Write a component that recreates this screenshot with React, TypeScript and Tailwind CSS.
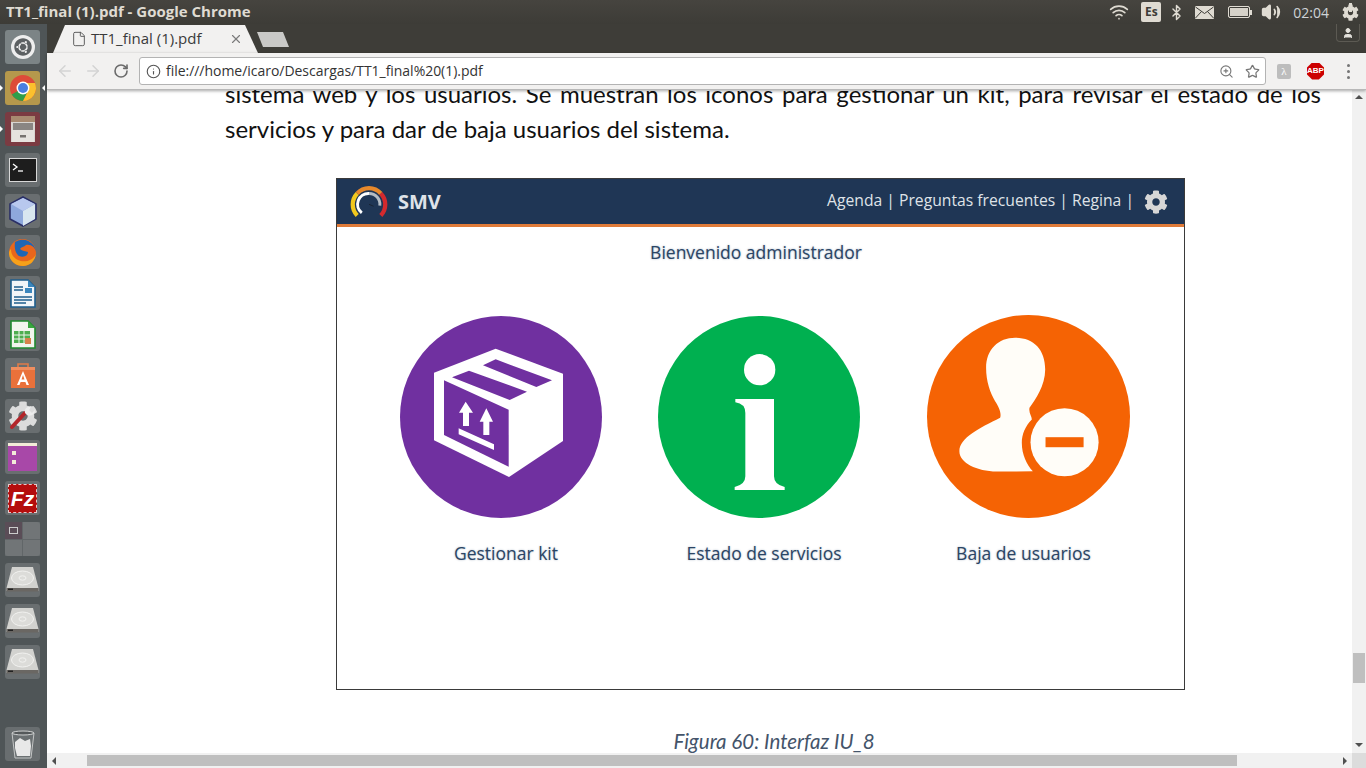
import React from 'react'
import { ArrowLeft, ArrowRight, RotateCw, Info, ZoomIn, Star, File, X, Wifi, Bluetooth, Volume2, User } from 'lucide-react'
import { FaCog, FaUbuntu } from 'react-icons/fa'

const Tile: React.FC<{ className?: string; children?: React.ReactNode }> = ({ className = 'bg-white/15', children }) => (
  <div className={`relative h-[34px] w-[35px] shrink-0 rounded-[3px] flex items-center justify-center ${className}`}>{children}</div>
)

const Disk = () => (
  <svg width="33" height="28" viewBox="0 0 33 28">
    <path d="M6 1H27L32.5 22V25H0.5V22Z" fill="#d2d2cf" />
    <path d="M0.5 22H32.5V25.5H0.5Z" fill="#6a6763" />
    <rect x="2" y="22.5" width="5" height="1.5" fill="#222222" />
    <ellipse cx="16.5" cy="12" rx="11" ry="7" fill="#dcdcd9" stroke="#f2f2f0" strokeWidth="1" />
    <ellipse cx="16.5" cy="12" rx="3.5" ry="2.2" fill="none" stroke="#f2f2f0" strokeWidth="1" />
  </svg>
)

const Launcher = () => (
  <aside className="w-[47px] shrink-0 flex flex-col gap-[7px] px-[5px] pt-[6px] bg-[#4f5557]">
    <Tile className="bg-[#7c8486]">
      <div className="w-[24px] h-[24px] rounded-full bg-[#eeeeee] flex items-center justify-center text-[#5d6163]"><FaUbuntu size={18} /></div>
    </Tile>
    <Tile className="bg-[#b5984c]">
      <span className="absolute -left-[5px] top-[14px] w-0 h-0 border-y-[3px] border-y-transparent border-l-[3px] border-l-white" />
      <span className="absolute -right-[5px] top-[14px] w-0 h-0 border-y-[3px] border-y-transparent border-r-[3px] border-r-white" />
      <svg width="28" height="28" viewBox="0 0 28 28">
        <circle cx="14" cy="14" r="13" fill="#dd4b39" />
        <path d="M14 14L2.8 20.5A13 13 0 0 0 14 27L20.5 14Z" fill="#2e9e4a" />
        <path d="M14 9H26A13 13 0 0 1 14 27L20.5 14Z" fill="#fbc02d" />
        <circle cx="14" cy="14" r="6.5" fill="#fff" />
        <circle cx="14" cy="14" r="5" fill="#4a7fe0" />
      </svg>
    </Tile>
    <Tile className="bg-[#7b3b42]">
      <span className="absolute -left-[5px] top-[14px] w-0 h-0 border-y-[3px] border-y-transparent border-l-[3px] border-l-white" />
      <svg width="26" height="28" viewBox="0 0 26 28">
        <rect x="1" y="1" width="24" height="26" fill="#d8d5d0" />
        <rect x="1" y="1" width="24" height="6" fill="#a88a70" />
        <rect x="3" y="8" width="20" height="7" fill="#8a8683" />
        <rect x="2" y="15" width="22" height="12" fill="#e6e3de" />
        <rect x="10" y="20" width="6" height="2.5" fill="#77736f" />
      </svg>
    </Tile>
    <Tile>
      <svg width="28" height="24" viewBox="0 0 28 24">
        <rect x="0.5" y="0.5" width="27" height="23" fill="#1d1d1d" stroke="#d8d8d8" />
        <path d="M4 6L8 9L4 12" fill="none" stroke="#fff" strokeWidth="1.3" />
        <path d="M9 13H14" stroke="#fff" strokeWidth="1.3" />
      </svg>
    </Tile>
    <Tile>
      <svg width="28" height="31" viewBox="0 0 28 31">
        <path d="M14 1L27 8V23L14 30L1 23V8Z" fill="#8ea8dc" stroke="#2a2f66" strokeWidth="1.6" />
        <path d="M14 15L26 8V23L14 30Z" fill="#d8e6f0" />
        <path d="M14 2L26 8L14 15L2 8Z" fill="#b8c8ee" />
      </svg>
    </Tile>
    <Tile>
      <svg width="29" height="29" viewBox="0 0 29 29">
        <circle cx="14.5" cy="14.5" r="13.5" fill="#e8661c" />
        <path d="M7 4A13.5 13.5 0 0 1 28 14C27 9 23 6 18 7C16 9 13 9 12 11C14 13 18 13 20 14C20 18 15 20 11 18C8 16 6 11 7 4Z" fill="#1f66b5" />
        <path d="M1 15C1 23 8 28 15 28C22 28 27 23 28 16C25 23 16 25 10 22C6 20 3 17 3 11C2 12 1 13 1 15Z" fill="#f7a11a" />
      </svg>
    </Tile>
    <Tile>
      <svg width="26" height="29" viewBox="0 0 26 29">
        <path d="M1 1H18L25 8V28H1Z" fill="#f2f5f8" stroke="#1f5e8c" strokeWidth="1.6" />
        <path d="M18 1L25 8H18Z" fill="#3b86bd" />
        <path d="M4 8H13M4 11H13M4 18H22M4 21H22M4 24H16" stroke="#1f5e8c" strokeWidth="1.6" />
        <rect x="15" y="9" width="7" height="5" fill="#3b86bd" />
      </svg>
    </Tile>
    <Tile>
      <svg width="26" height="29" viewBox="0 0 26 29">
        <path d="M1 1H18L25 8V28H1Z" fill="#f2f5ee" stroke="#1f8a2e" strokeWidth="1.6" />
        <path d="M18 1L25 8H18Z" fill="#3aa63f" />
        <path d="M4 11H20V23H4Z" fill="#4fae4f" />
        <path d="M4 15H20M4 19H20M9 11V23M14 11V23" stroke="#f2f5ee" strokeWidth="1" />
        <rect x="15" y="18" width="6" height="6" fill="#d9824a" />
      </svg>
    </Tile>
    <Tile>
      <svg width="26" height="28" viewBox="0 0 26 28">
        <path d="M8 6V3H18V6" fill="none" stroke="#e07b48" strokeWidth="1.6" />
        <path d="M1 6H25V27H1Z" fill="#e9713b" />
        <path d="M1 6H25V9H1Z" fill="#f08e5f" />
        <path d="M13 10L19 24H16.5L15.4 21H10.6L9.5 24H7ZM13 14L11.5 18.5H14.5Z" fill="#fff" />
      </svg>
    </Tile>
    <Tile>
      <FaCog size={30} className="text-[#dcdcdc]" />
      <svg className="absolute left-[3px] top-[3px]" width="29" height="29" viewBox="0 0 29 29">
        <path d="M4 25L17 11" stroke="#b3252a" strokeWidth="4" strokeLinecap="round" />
        <path d="M17 11C16 7 19 4 24 4L21 8L24 11L27 8C27 12 23 15 19 13Z" fill="#ededed" />
      </svg>
    </Tile>
    <Tile>
      <svg width="29" height="28" viewBox="0 0 29 28">
        <rect x="0" y="0" width="29" height="28" fill="#a848a8" />
        <rect x="0" y="0" width="29" height="3" fill="#f3ecd8" />
        <rect x="4" y="8" width="4" height="4" fill="#f3ecd8" />
        <rect x="4" y="17" width="4" height="4" fill="#f3ecd8" />
      </svg>
    </Tile>
    <Tile className="bg-white/15">
      <div className="w-[29px] h-[29px] bg-[#b40d0d] border border-dashed border-[#e8c8c8] flex items-center justify-center font-['Liberation_Sans',sans-serif] font-bold italic text-white text-[21px] leading-none">Fz</div>
    </Tile>
    <Tile className="bg-white/10">
      <div className="grid grid-cols-2 grid-rows-2 w-full h-full gap-px">
        <div className="bg-[#5a4d57] flex items-center justify-center"><div className="w-[9px] h-[7px] border border-[#cccccc]" /></div>
        <div className="bg-white/10" />
        <div className="bg-white/10" />
        <div className="bg-white/10" />
      </div>
    </Tile>
    <Tile><Disk /></Tile>
    <Tile><Disk /></Tile>
    <Tile><Disk /></Tile>
    <Tile className="bg-white/15 mt-auto mb-[7px]">
      <svg width="24" height="29" viewBox="0 0 24 29">
        <path d="M1 3H23L20 28H4Z" fill="#6b7072" stroke="#c4c6c6" />
        <ellipse cx="12" cy="3" rx="11" ry="2" fill="#55595b" stroke="#d0d2d2" />
        <path d="M4 12L9 8L14 11L19 9L20 16L19 26H6L4 18Z" fill="#e8e8e8" />
      </svg>
    </Tile>
  </aside>
)

const TopBar = () => (
  <header className="h-[24px] shrink-0 flex items-center bg-gradient-to-b from-[#46443f] to-[#3d3c37] text-[#dfdbd2]">
    <span className="pl-[6px] mb-[2px] font-['Open_Sans',sans-serif] font-bold text-[15px] leading-none">TT1_final (1).pdf - Google Chrome</span>
    <div className="ml-auto flex items-center h-full">
      <Wifi size={20} strokeWidth={2} className="text-[#dfdbd2]" />
      <div className="ml-[12px] w-[20px] h-[20px] rounded-[2px] bg-[#dfdbd2] text-[#3d3c37] text-[12px] font-bold flex items-center justify-center font-['Open_Sans',sans-serif]">Es</div>
      <Bluetooth size={17} className="ml-[7px]" />
      <svg width="19" height="13" viewBox="0 0 19 13" className="ml-[10px]">
        <rect x="0" y="0" width="19" height="13" rx="1" fill="#dfdbd2" />
        <path d="M0.5 1L9.5 7.5L18.5 1M0.5 12L6.5 5.5M18.5 12L12.5 5.5" fill="none" stroke="#3d3c37" strokeWidth="1" />
      </svg>
      <div className="ml-[14px] flex items-center">
        <div className="w-[22px] h-[12px] border border-[#dfdbd2] bg-[#d6d2c9] rounded-[2px] outline outline-[#3d3c37] -outline-offset-2" />
        <div className="w-[2px] h-[5px] bg-[#dfdbd2]" />
      </div>
      <Volume2 size={20} fill="#dfdbd2" className="ml-[9px]" />
      <span className="ml-[12px] font-['Open_Sans',sans-serif] text-[14px] text-[#cfd3d6]">02:04</span>
      <span className="ml-[13px] mr-[7px] relative flex items-center justify-center">
        <FaCog size={17} />
        <span className="absolute w-[3px] h-[9px] bg-[#dfdbd2] -top-px" />
      </span>
    </div>
  </header>
)

const TabStrip = () => (
  <div className="h-[29px] shrink-0 flex items-start bg-[#3e3d38]">
    <div className="mt-px ml-[6px] w-[205px] h-[28px] bg-[#f2f1f0] [clip-path:polygon(12px_0,192px_0,205px_100%,0_100%)] flex items-center pl-[18px] pr-[15px] text-[#3a3a3a] font-['Open_Sans',sans-serif] text-[15px]">
      <File size={16} strokeWidth={1.4} className="text-[#555555]" />
      <span className="ml-[4px] mb-[2px] leading-none">TT1_final (1).pdf</span>
      <X size={14} strokeWidth={2} className="ml-auto text-[#7b7b7b]" />
    </div>
    <div className="mt-[8px] -ml-px w-[32px] h-[15px] bg-[#c9c9c7] [clip-path:polygon(0_0,26px_0,100%_100%,6px_100%)]" />
    <div className="ml-auto mr-[6px] w-[24px] h-[18px] border border-t-0 border-[#5c5a53] rounded-b-[4px] flex items-center justify-center text-[#e4e2dc]">
      <User size={12} fill="#e4e2dc" />
    </div>
  </div>
)

const Toolbar = () => (
  <div className="relative z-10 h-[37px] shrink-0 flex items-center bg-[#f2f1f0] border-b border-[#b8b8b8] shadow-[0_1px_3px_rgba(0,0,0,0.35)]">
    <ArrowLeft size={18} strokeWidth={2} className="ml-[9px] text-[#d3d3d3]" />
    <ArrowRight size={18} strokeWidth={2} className="ml-[10px] text-[#d3d3d3]" />
    <RotateCw size={16} strokeWidth={2.4} className="ml-[11px] text-[#6b6b6b]" />
    <div className="ml-[10px] w-[1127px] h-[28px] bg-white border border-[#b3b3b3] rounded-[3px] flex items-center pl-[6px] pr-[5px] font-['Open_Sans',sans-serif] text-[14px] tracking-[-0.03px] text-[#333333]">
      <Info size={15} strokeWidth={1.8} className="text-[#555555]" />
      <span className="ml-[5px] leading-none">file:///home/icaro/Descargas/TT1_final%20(1).pdf</span>
      <ZoomIn size={15} strokeWidth={1.8} className="ml-auto text-[#777777]" />
      <Star size={15} strokeWidth={2} className="ml-[11px] text-[#777777]" />
    </div>
    <div className="ml-[11px] w-[14px] h-[15px] rounded-[2px] bg-[#bdbdbd] text-white text-[11px] flex items-center justify-center font-['Liberation_Serif',serif]">λ</div>
    <div className="ml-[16px] w-[17px] h-[17px] bg-[#cc0000] [clip-path:polygon(30%_0,70%_0,100%_30%,100%_70%,70%_100%,30%_100%,0_70%,0_30%)] text-white text-[8px] font-bold flex items-center justify-center font-['Liberation_Sans',sans-serif] leading-none">ABP</div>
    <div className="ml-[23px] flex flex-col gap-[3px]">
      <span className="w-[3px] h-[3px] rounded-full bg-[#757575]" />
      <span className="w-[3px] h-[3px] rounded-full bg-[#757575]" />
      <span className="w-[3px] h-[3px] rounded-full bg-[#757575]" />
    </div>
  </div>
)

const SmvLogo = () => (
  <svg width="38" height="34" viewBox="40 30 116 102" className="shrink-0">
    <path d="M62 122A48 48 0 0 1 62 55" fill="none" stroke="#f2c81e" strokeWidth="13" />
    <path d="M62 55A48 48 0 0 1 134 55" fill="none" stroke="#e8892b" strokeWidth="13" />
    <path d="M134 55A48 48 0 0 1 134 122" fill="none" stroke="#d32a2e" strokeWidth="13" />
    <path d="M76 114A33 33 0 0 1 98 55" fill="none" stroke="#ffffff" strokeWidth="9" />
    <path d="M98 55A33 33 0 0 1 131 92" fill="none" stroke="#b4bcc4" strokeWidth="9" />
    <path d="M98 88L112 94" stroke="#111111" strokeWidth="1.5" />
  </svg>
)

const Figure = () => (
  <div className="mt-[32px] ml-[111px] w-[849px] h-[512px] shrink-0 border border-[#3a3a3a] bg-white font-['Open_Sans',sans-serif]">
    <div className="h-[48px] bg-[#1f3655] border-b-[3px] border-[#e07b39] flex items-center pl-[13px] pr-[16px] text-[#dfe3e8]">
      <SmvLogo />
      <span className="ml-[10px] text-[20px] font-bold leading-none">SMV</span>
      <span className="ml-auto mb-[2px] text-[15.7px] leading-none">Agenda | Preguntas frecuentes | Regina |</span>
      <FaCog size={24} className="ml-[10px] text-[#d6d6d6]" />
    </div>
    <div className="mt-[12px] pr-[9px] text-center text-[17.5px] leading-[26px] text-[#2b4565] [text-shadow:0_0_2px_rgba(36,70,110,0.45)]">Bienvenido administrador</div>
    <div className="mt-[51px] ml-[63px] flex items-start">
      <svg width="202" height="202" viewBox="31 35 606 606" className="shrink-0">
        <circle cx="334" cy="338" r="303" fill="#7030a0" />
        <path d="M133 205L318 133L520 208V410L358 518L133 408Z" fill="#fff" />
        <path d="M163 228L357 316V487L163 392Z" fill="#7030a0" />
        <path d="M187 219L238 199L412 262L360 287Z M280 183L318 165L487 228L440 248Z" fill="#7030a0" />
        <path d="M228 292L250 325H238V365H220V325H208Z M290 312L310 352H299V392H281V352H270Z M207 372L313 420V437L207 390Z" fill="#fff" />
      </svg>
      <svg width="202" height="202" viewBox="25 34 606 606" className="ml-[56px] shrink-0">
        <circle cx="328" cy="337" r="303" fill="#00b050" />
        <circle cx="330" cy="195" r="47" fill="#fff" />
        <path d="M257 283H373V515Q373 540 405 547V556H255V547Q287 540 287 515V325Q287 297 257 293Z" fill="#fff" />
      </svg>
      <svg width="203" height="203" viewBox="21 27 608 608" className="ml-[67px] -mt-px shrink-0">
        <circle cx="325" cy="331" r="304" fill="#f56304" />
        <path d="M285 95C340 95 375 130 375 190C375 240 345 280 328 305C325 320 335 330 335 340C315 360 305 385 305 410C305 445 320 475 338 495L230 496C170 495 118 470 118 435C118 395 180 365 240 335C245 320 235 300 225 285C210 260 198 225 198 185C198 130 235 95 285 95Z" fill="#fffdf8" />
        <circle cx="433" cy="408" r="102" fill="#fffdf8" />
        <rect x="376" y="393" width="114" height="30" fill="#f56304" />
      </svg>
    </div>
    <div className="mt-[23px] ml-[63px] flex text-[17.5px] leading-[24px] text-[#2b4565] text-center [text-shadow:0_0_2px_rgba(44,74,110,0.4)]">
      <div className="w-[202px] shrink-0 pl-[10px]">Gestionar kit</div>
      <div className="ml-[56px] w-[202px] shrink-0 pl-[10px]">Estado de servicios</div>
      <div className="ml-[67px] w-[203px] shrink-0 pr-[10px]">Baja de usuarios</div>
    </div>
  </div>
)

const Triangle: React.FC<{ dir: 'up' | 'down' | 'left' | 'right' }> = ({ dir }) => {
  if (dir === 'up') return <span className="w-0 h-0 border-x-[4px] border-x-transparent border-b-[4px] border-b-[#505050]" />
  if (dir === 'down') return <span className="w-0 h-0 border-x-[4px] border-x-transparent border-t-[4px] border-t-[#505050]" />
  if (dir === 'left') return <span className="w-0 h-0 border-y-[4px] border-y-transparent border-r-[4px] border-r-[#505050]" />
  return <span className="w-0 h-0 border-y-[4px] border-y-transparent border-l-[4px] border-l-[#505050]" />
}

export default function App() {
  return (
    <div className="w-[1366px] h-[768px] flex flex-col overflow-hidden bg-white">
      <TopBar />
      <div className="flex flex-1 min-h-0">
        <Launcher />
        <main className="flex-1 min-w-0 flex flex-col">
          <TabStrip />
          <Toolbar />
          <div className="flex flex-1 min-h-0">
            <div className="flex-1 min-w-0 flex flex-col">
              <div className="flex-1 min-h-0 overflow-hidden pl-[178px] pr-[31px]">
                <div className="-mt-[14px] font-['Lato',sans-serif] text-[24px] leading-[35px] text-[#111111]">
                  <div className="text-justify [text-align-last:justify] whitespace-nowrap">sistema web y los usuarios. Se muestran los iconos para gestionar un kit, para revisar el estado de los</div>
                  <div>servicios y para dar de baja usuarios del sistema.</div>
                </div>
                <Figure />
                <div className="mt-[38px] pl-[2px] text-center font-['Lato',sans-serif] italic text-[20.5px] leading-[26px] text-[#44546a]">Figura 60: Interfaz IU_8</div>
              </div>
              <div className="h-[15px] shrink-0 flex items-center bg-[#f1f1f1]">
                <div className="w-[40px] pl-[5px] flex"><Triangle dir="left" /></div>
                <div className="w-[1150px] h-[11px] bg-[#bfbfbf]" />
                <div className="ml-auto pr-[5px] flex"><Triangle dir="right" /></div>
              </div>
            </div>
            <div className="w-[14px] shrink-0 flex flex-col items-center bg-[#f1f1f1]">
              <div className="pt-[5px] flex"><Triangle dir="up" /></div>
              <div className="mt-[554px] w-[12px] h-[30px] bg-[#bfbfbf]" />
              <div className="mt-[60px] flex"><Triangle dir="down" /></div>
              <div className="mt-auto h-[15px] w-full bg-[#dcdcdc]" />
            </div>
          </div>
        </main>
      </div>
    </div>
  )
}
